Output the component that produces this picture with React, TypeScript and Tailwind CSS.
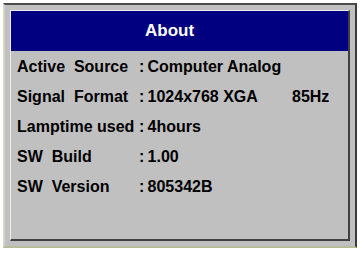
const rows: { label: string; value: string; extra?: string }[] = [
  { label: 'Active  Source', value: 'Computer Analog' },
  { label: 'Signal  Format', value: '1024x768 XGA', extra: '85Hz' },
  { label: 'Lamptime used', value: '4hours' },
  { label: 'SW  Build', value: '1.00' },
  { label: 'SW  Version', value: '805342B' },
];

export default function App() {
  return (
    <div className="w-[360px] h-[254px] bg-white pt-[3px] pl-[3px]" style={{ fontFamily: '"Liberation Sans", Arial, sans-serif' }}>
      <div className="w-[354px] h-[245px] bg-[#c0c0c0] border-t-2 border-t-[#4a4a4a] border-l-2 border-l-[#d4d6c4] border-r-2 border-r-[#3c3c3c] border-b-2 border-b-[#b4bc98] p-[5px]">
        <div className="h-full flex flex-col border-t border-l border-t-[#eeeeee] border-l-[#eeeeee] border-r-2 border-b-2 border-r-[#404040] border-b-[#404040]">
          <div className="h-[40px] bg-[#000080] flex items-center pl-[134px] text-white font-bold text-[17px]">
            About
          </div>
          <div className="flex flex-col pl-[6px] pt-[1px] text-black font-bold text-[16px] whitespace-pre">
            {rows.map((r) => (
              <div key={r.label} className="h-[30px] flex items-center">
                <span className="w-[122px]">{r.label}</span>
                <span className="w-[153px]">:{'\u2009'}{r.value}</span>
                {r.extra && <span>{r.extra}</span>}
              </div>
            ))}
          </div>
        </div>
      </div>
    </div>
  );
}
